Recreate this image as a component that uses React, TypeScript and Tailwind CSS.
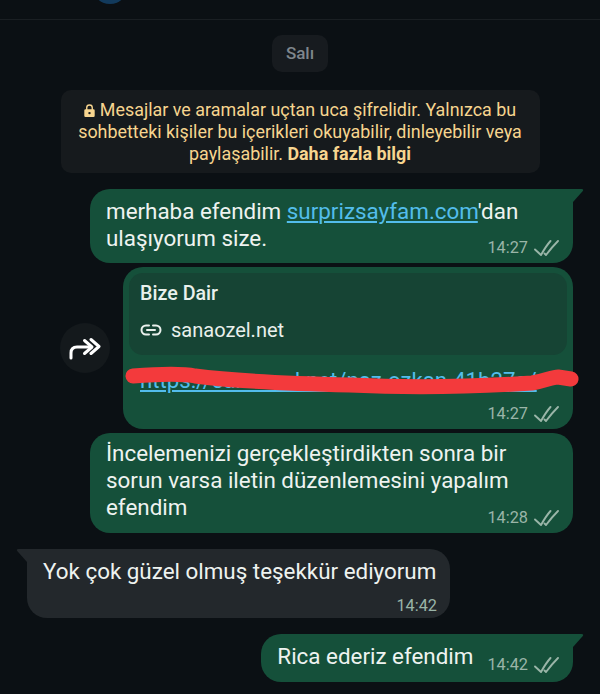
const font = { fontFamily: "Roboto, 'Noto Sans', sans-serif" };

function Checks() {
  return (
    <svg width="25" height="17" viewBox="0 0 25 17" fill="none" stroke="#9ab5a8" strokeWidth="1.9" strokeLinecap="round" strokeLinejoin="round" className="shrink-0">
      <path d="M1 9.5 L7 15 Q12 6 16.5 1" />
      <path d="M10.5 13.5 L12 15 Q18 7 24 1" />
    </svg>
  );
}

function Meta({ time, checks = true }: { time: string; checks?: boolean }) {
  return (
    <div className="flex items-center justify-end gap-[6px] text-[16.3px] leading-[20px] text-[#9ab5a8]">
      <span>{time}</span>
      {checks && <Checks />}
    </div>
  );
}

function TailRight() {
  return (
    <svg width="12" height="14" viewBox="0 0 12 14" className="absolute top-0 right-[-11px]">
      <path d="M0 0 H9.5 Q12 0 10.8 2 L1 13 L0 14 Z" fill="#15503a" />
    </svg>
  );
}

function TailLeft() {
  return (
    <svg width="12" height="14" viewBox="0 0 12 14" className="absolute top-0 left-[-11px]">
      <path d="M12 0 H2.5 Q0 0 1.2 2 L11 13 L12 14 Z" fill="#23282c" />
    </svg>
  );
}

export default function App() {
  return (
    <div style={font} className="w-[600px] h-[694px] overflow-hidden bg-[#0b1014] flex flex-col text-[#eef3f0]">
      <div className="h-[20px] shrink-0 border-b border-[#1a1f23] pl-[92px]">
        <div className="w-[36px] h-[36px] -mt-[32px] rounded-full bg-[#123a5c]" />
      </div>

      <div className="self-center mt-[15px] w-[56px] h-[37px] rounded-[10px] bg-[#171b1f] flex items-center justify-center text-[17px] font-medium text-[#7f868c]">
        Salı
      </div>

      <div className="self-center mt-[18px] w-[479px] h-[83px] rounded-[10px] bg-[#161a1d] flex items-center justify-center text-center text-[17.9px] leading-[22px] text-[#f7d58f] pt-[1px]">
        <p className="whitespace-nowrap">
          <svg width="11" height="13" viewBox="0 0 12 15" className="inline-block align-[-1px] mr-[5px]" fill="#f7d58f">
            <path d="M2 6V4.4a4 4 0 0 1 8 0V6h.6A1.4 1.4 0 0 1 12 7.4v6.2a1.4 1.4 0 0 1-1.4 1.4H1.4A1.4 1.4 0 0 1 0 13.6V7.4A1.4 1.4 0 0 1 1.4 6H2zm1.6 0h4.8V4.4a2.4 2.4 0 0 0-4.8 0V6z" />
            <circle cx="6" cy="10.5" r="1.4" fill="#161a1d" />
          </svg>
          Mesajlar ve aramalar uçtan uca şifrelidir. Yalnızca bu
          <br />
          sohbetteki kişiler bu içerikleri okuyabilir, dinleyebilir veya
          <br />
          paylaşabilir. <span className="font-bold">Daha fazla bilgi</span>
        </p>
      </div>

      <div className="relative self-end mt-[16px] mr-[27px] w-[483px] h-[74px] rounded-[20px] rounded-tr-none bg-[#15503a] pl-[16px] pr-[14px] pt-[9px] text-[22.4px] leading-[27px]">
        <TailRight />
        <p className="whitespace-nowrap">
          merhaba efendim <span className="text-[#53bdeb] underline underline-offset-2">surprizsayfam.com</span>'dan
          <br />
          ulaşıyorum size.
        </p>
        <div className="-mt-[14px]"><Meta time="14:27" /></div>
      </div>

      <div className="self-end mt-[4px] mr-[27px] flex items-center gap-[13px]">
        <div className="w-[50px] h-[50px] rounded-full bg-[#14191c] flex items-center justify-center">
          <svg width="32" height="24" viewBox="0 0 32 24" fill="none" stroke="#fff" strokeWidth="3" strokeLinecap="round" strokeLinejoin="round">
            <path d="M2 22 V17 Q2 11 8 11 H22" />
            <path d="M15.5 4.5 L23 11 L15.5 17.5" />
            <path d="M22 3.5 L30 10.5 L22 17.5" />
          </svg>
        </div>
        <div className="relative w-[450px] h-[162px] rounded-[20px] bg-[#15503a] p-[6px] pt-[6px]">
          <div className="h-[82px] rounded-[14px] bg-[#164434] px-[11px] pt-[9px] text-[#e9f0ec]">
            <div className="text-[19.7px] leading-[24px] font-medium">Bize Dair</div>
            <div className="mt-[11px] flex items-center gap-[9px] text-[20px] leading-[26px]">
              <svg width="22" height="12" viewBox="0 0 22 12" fill="none" stroke="#e9f0ec" strokeWidth="2" strokeLinecap="round">
                <path d="M9 1.5H6a4.5 4.5 0 0 0 0 9h3" />
                <path d="M13 1.5h3a4.5 4.5 0 0 1 0 9h-3" />
                <path d="M7 6h8" />
              </svg>
              <span>sanaozel.net</span>
            </div>
          </div>
          <div className="mt-[12px] pl-[11px] text-[22.2px] leading-[26px] text-[#53bdeb] underline underline-offset-2 whitespace-nowrap">
            https://sanaozel.net/naz-ozkan-41b27a/
          </div>
          <div className="mt-[11px] pr-[8px]"><Meta time="14:27" /></div>
          <svg width="470" height="44" viewBox="0 0 470 44" fill="none" className="absolute left-[-3px] top-[92px]">
            <path d="M13 17 C40 15 60 14 75 17 C105 21 150 24 230 26 C290 29 350 28 412 24 C425 22 432 18 438 18 L451 20" stroke="#f33a3c" strokeWidth="15" strokeLinecap="round" strokeLinejoin="round" />
          </svg>
        </div>
      </div>

      <div className="relative self-end mt-[4px] mr-[27px] w-[483px] h-[100px] rounded-[20px] bg-[#15503a] pl-[16px] pr-[14px] pt-[7px] text-[22.4px] leading-[27px]">
        <p className="whitespace-nowrap">
          İncelemenizi gerçekleştirdikten sonra bir
          <br />
          sorun varsa iletin düzenlemesini yapalım
          <br />
          efendim
        </p>
        <div className="-mt-[13px]"><Meta time="14:28" /></div>
      </div>

      <div className="relative self-start mt-[16px] ml-[27px] w-[423px] h-[69px] rounded-[20px] rounded-tl-none bg-[#23282c] pl-[16px] pr-[13px] pt-[9px] text-[22.4px] leading-[27px]">
        <TailLeft />
        <p className="whitespace-nowrap">Yok çok güzel olmuş teşekkür ediyorum</p>
        <div className="mt-[11px]"><Meta time="14:42" checks={false} /></div>
      </div>

      <div className="relative self-end mt-[16px] mr-[27px] h-[48px] rounded-[20px] rounded-tr-none bg-[#15503a] pl-[16px] pr-[14px] flex items-center gap-[14px] text-[22.4px] leading-[27px]">
        <TailRight />
        <p className="-mt-[4px] whitespace-nowrap">Rica ederiz efendim</p>
        <div className="mt-[14px]"><Meta time="14:42" /></div>
      </div>
    </div>
  );
}
